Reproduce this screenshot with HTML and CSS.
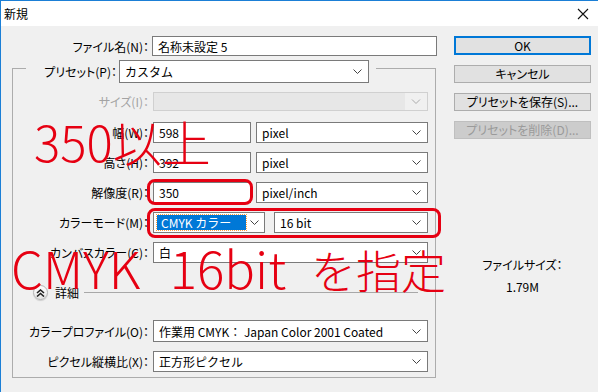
FILE: index.html
```html
<!DOCTYPE html>
<html lang="ja">
<head>
    <meta charset="UTF-8">
    <title>新規</title>
    <link rel="stylesheet" href="styles.css">
</head>
<body>
<div class="window">
    <div class="titlebar">
        <span class="title">新規</span>
        <svg class="close" width="12" height="12" viewBox="0 0 12 12"><path d="M1 1 L11 11 M11 1 L1 11" stroke="#111" stroke-width="1.1"/></svg>
    </div>
    <div class="content">
        <div class="form">
            <div class="row first">
                <label class="lbl wide">ファイル名(N)：</label>
                <div class="field text grow">名称未設定 5</div>
            </div>
            <div class="group">
                <div class="legend">
                    <label class="lbl preset">プリセット(P)：</label>
                    <div class="field select grow tall"><span>カスタム</span><svg class="chev" width="9" height="5" viewBox="0 0 9 5"><path d="M0.5 0.5 L4.5 4.5 L8.5 0.5" fill="none" stroke="#444"/></svg></div>
                </div>
                <div class="row size">
                    <label class="lbl off">サイズ(I)：</label>
                    <div class="field select disabled grow"><span></span><svg class="chev" width="9" height="5" viewBox="0 0 9 5"><path d="M0.5 0.5 L4.5 4.5 L8.5 0.5" fill="none" stroke="#aaa"/></svg></div>
                </div>
                <div class="row">
                    <label class="lbl">幅(W)：</label>
                    <div class="field text num">598</div>
                    <div class="field select grow"><span>pixel</span><svg class="chev" width="9" height="5" viewBox="0 0 9 5"><path d="M0.5 0.5 L4.5 4.5 L8.5 0.5" fill="none" stroke="#444"/></svg></div>
                </div>
                <div class="row">
                    <label class="lbl">高さ(H)：</label>
                    <div class="field text num">392</div>
                    <div class="field select grow"><span>pixel</span><svg class="chev" width="9" height="5" viewBox="0 0 9 5"><path d="M0.5 0.5 L4.5 4.5 L8.5 0.5" fill="none" stroke="#444"/></svg></div>
                </div>
                <div class="row">
                    <label class="lbl">解像度(R)：</label>
                    <div class="field text num">350</div>
                    <div class="field select grow"><span>pixel/inch</span><svg class="chev" width="9" height="5" viewBox="0 0 9 5"><path d="M0.5 0.5 L4.5 4.5 L8.5 0.5" fill="none" stroke="#444"/></svg></div>
                </div>
                <div class="row">
                    <label class="lbl">カラーモード(M)：</label>
                    <div class="field select mode"><span class="hl">CMYK カラー</span><svg class="chev" width="9" height="5" viewBox="0 0 9 5"><path d="M0.5 0.5 L4.5 4.5 L8.5 0.5" fill="none" stroke="#444"/></svg></div>
                    <div class="field select grow bits"><span>16 bit</span><svg class="chev" width="9" height="5" viewBox="0 0 9 5"><path d="M0.5 0.5 L4.5 4.5 L8.5 0.5" fill="none" stroke="#444"/></svg></div>
                </div>
                <div class="row">
                    <label class="lbl">カンバスカラー(C)：</label>
                    <div class="field select grow"><span>白</span><svg class="chev" width="9" height="5" viewBox="0 0 9 5"><path d="M0.5 0.5 L4.5 4.5 L8.5 0.5" fill="none" stroke="#444"/></svg></div>
                </div>
                <div class="detail">
                    <span class="toggle"><svg width="9" height="8" viewBox="0 0 9 8"><path d="M1 4 L4.5 1 L8 4 M1 7.5 L4.5 4.5 L8 7.5" fill="none" stroke="#222" stroke-width="1.6"/></svg></span>
                    <span class="detail-text">詳細</span>
                    <span class="rule"></span>
                </div>
                <div class="row profile">
                    <label class="lbl">カラープロファイル(O)：</label>
                    <div class="field select grow"><span>作業用 CMYK： Japan Color 2001 Coated</span><svg class="chev" width="9" height="5" viewBox="0 0 9 5"><path d="M0.5 0.5 L4.5 4.5 L8.5 0.5" fill="none" stroke="#444"/></svg></div>
                </div>
                <div class="row">
                    <label class="lbl">ピクセル縦横比(X)：</label>
                    <div class="field select grow"><span>正方形ピクセル</span><svg class="chev" width="9" height="5" viewBox="0 0 9 5"><path d="M0.5 0.5 L4.5 4.5 L8.5 0.5" fill="none" stroke="#444"/></svg></div>
                </div>
            </div>
        </div>
        <div class="side">
            <button class="btn default">OK</button>
            <button class="btn">キャンセル</button>
            <button class="btn">プリセットを保存(S)...</button>
            <button class="btn disabled">プリセットを削除(D)...</button>
            <div class="filesize">
                <div>ファイルサイズ：</div>
                <div class="fs-value">1.79M</div>
            </div>
        </div>
    </div>

    <!-- 赤い注釈 -->
    <div class="note note-res">350以上</div>
    <div class="mark mark-res"></div>
    <div class="mark mark-mode"></div>
    <div class="note note-mode">CMYK 16bit<span class="jp"> を指定</span></div>
</div>
</body>
</html>
```

FILE: styles.css
```css
* {
    box-sizing: border-box;
}
body {
    margin: 0;
    background: #f0f0f0;
    font-family: "Noto Sans CJK JP", "Noto Sans", sans-serif;
    font-size: 12px;
    color: #000;
}
.window {
    position: relative;
    width: 598px;
    height: 392px;
    border-top: 1px solid #1b7fd6;
    border-left: 1px solid #1b7fd6;
    background: #f0f0f0;
    overflow: hidden;
}
.titlebar {
    height: 25px;
    background: #fff;
    display: flex;
    align-items: center;
    justify-content: space-between;
    padding: 0 9px 0 3px;
}
.title {
    font-size: 12px;
}
.content {
    display: flex;
    padding-top: 10px;
}
.form {
    width: 436px;
}

/* Zeilen */
.row {
    display: flex;
    align-items: center;
    gap: 5px;
    height: 21px;
    margin-top: 9px;
}
.row.first {
    margin-top: 0;
    height: 20px;
    gap: 4px;
}
.lbl {
    width: 136px;
    text-align: right;
    font-feature-settings: "palt";
    white-space: nowrap;
    flex-shrink: 0;
    margin-right: -1px;
}
.lbl.wide {
    width: 148px;
}
.lbl.off {
    color: #a3a3a3;
}
.field {
    height: 100%;
    background: #fff;
    border: 1px solid #7a7a7a;
    display: flex;
    align-items: center;
    padding: 0 6px 0 5px;
    white-space: nowrap;
    overflow: hidden;
}
.grow {
    flex: 1;
}
.num {
    width: 98px;
}
.select {
    justify-content: space-between;
}
.select .chev {
    flex-shrink: 0;
    margin-left: 4px;
}
.field.disabled {
    background: #e7e7e7;
    border-color: #d0d0d0;
    padding-right: 0;
}
.field.disabled .chev {
    background: #f0f0f0;
    width: 22px;
    height: 17px;
    padding: 6px 6px;
}

/* Gruppenrahmen */
.group {
    margin: 12px 0 0 11px;
    width: 424px;
    height: 310px;
    border: 1px solid #acacac;
    padding: 0 7px 0 0;
}
.legend {
    display: flex;
    align-items: center;
    margin: -9px 0 0 13px;
    padding-right: 7px;
    width: 350px;
    height: 23px;
    background: #f0f0f0;
}
.lbl.preset {
    width: 94px;
    padding-right: 3px;
}
.tall {
    height: 23px;
}
.row.size {
    height: 19px;
}
.row.size + .row {
    margin-top: 11px;
}
.mode {
    width: 112px;
    padding-left: 3px;
    padding-right: 5px;
}
.hl {
    background: #0078d7;
    color: #fff;
    padding: 0 4px;
    width: 89px;
    height: 15px;
    line-height: 15px;
    outline: 1px dotted #ff9e3d;
}
.bits {
    margin-left: 4px;
}

/* Details */
.detail {
    display: flex;
    align-items: center;
    height: 15px;
    margin-top: 22px;
    padding-left: 20px;
}
.toggle {
    width: 15px;
    height: 15px;
    border-radius: 50%;
    border: 1px solid #b4b4b4;
    background: linear-gradient(#ffffff, #e4e4e4);
    box-shadow: 0 1px 1px rgba(0, 0, 0, 0.15);
    display: flex;
    align-items: center;
    justify-content: center;
}
.detail-text {
    margin-left: 7px;
}
.rule {
    height: 1px;
    width: 334px;
    background: #a8a8a8;
    margin-left: 5px;
}
.row.profile {
    margin-top: 20px;
    height: 22px;
}

/* Buttons */
.side {
    margin-left: 17px;
    width: 137px;
    display: flex;
    flex-direction: column;
    gap: 10px;
}
.btn {
    height: 18px;
    padding: 0;
    border: 1px solid #adadad;
    background: #e1e1e1;
    font-family: inherit;
    font-size: 12px;
    line-height: 14px;
    color: #000;
    font-feature-settings: "palt";
}
.btn.default {
    border: 2px solid #0078d7;
    height: 19px;
}
.btn.disabled {
    background: #cccccc;
    border-color: #bfbfbf;
    color: #9a9a9a;
}
.filesize {
    margin-top: 107px;
    text-align: center;
    font-feature-settings: "palt";
}
.fs-value {
    margin-top: 5px;
}

/* Anmerkungen in Rot */
.note {
    position: absolute;
    color: #e60012;
    line-height: 1;
    white-space: nowrap;
    font-weight: 300;
}
.note-res {
    left: 33px;
    top: 115px;
    font-size: 49px;
}
.note-mode {
    left: 10px;
    top: 241px;
    font-size: 51px;
    word-spacing: 18px;
}
.note-mode .jp {
    font-size: 45px;
    word-spacing: 15px;
}
.mark {
    position: absolute;
    border: 3px solid #e60012;
    border-radius: 8px;
}
.mark-res {
    left: 146px;
    top: 178px;
    width: 106px;
    height: 26px;
}
.mark-mode {
    left: 146px;
    top: 207px;
    width: 294px;
    height: 30px;
}
```
